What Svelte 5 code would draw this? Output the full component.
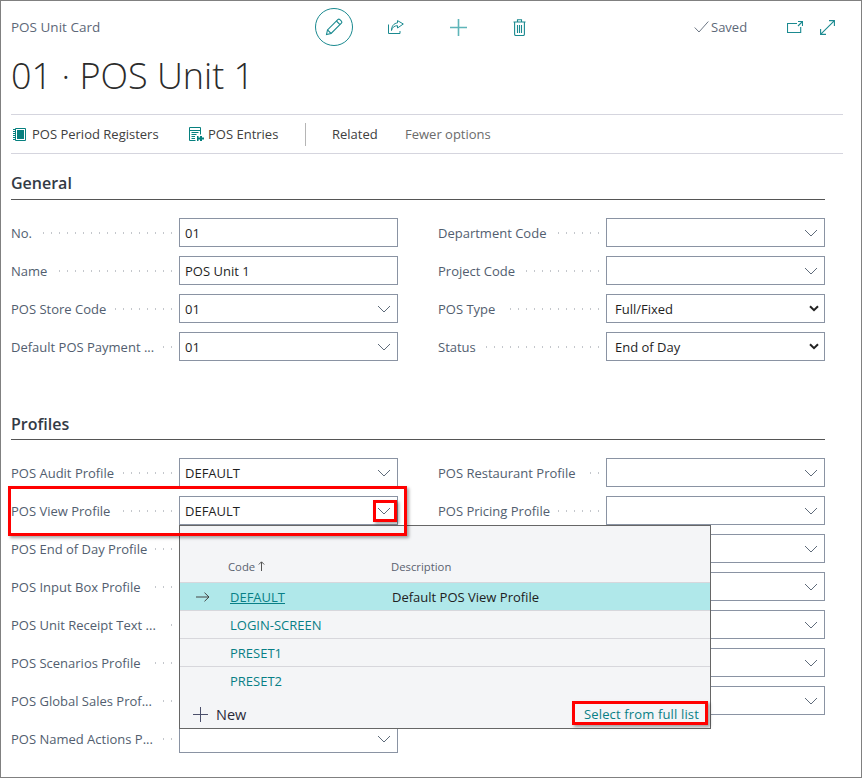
<script lang="ts">
	const general = {
		left: [
			{ label: 'No.', value: '01', kind: 'text' },
			{ label: 'Name', value: 'POS Unit 1', kind: 'text' },
			{ label: 'POS Store Code', value: '01', kind: 'lookup' },
			{ label: 'Default POS Payment ...', value: '01', kind: 'lookup' }
		],
		right: [
			{ label: 'Department Code', value: '', kind: 'lookup' },
			{ label: 'Project Code', value: '', kind: 'lookup' },
			{ label: 'POS Type', value: 'Full/Fixed', kind: 'select' },
			{ label: 'Status', value: 'End of Day', kind: 'select' }
		]
	};

	const profiles = {
		left: [
			{ label: 'POS Audit Profile', value: 'DEFAULT', kind: 'lookup' },
			{ label: 'POS View Profile', value: 'DEFAULT', kind: 'lookup' },
			{ label: 'POS End of Day Profile', value: '', kind: 'lookup' },
			{ label: 'POS Input Box Profile', value: '', kind: 'lookup' },
			{ label: 'POS Unit Receipt Text ...', value: '', kind: 'lookup' },
			{ label: 'POS Scenarios Profile', value: '', kind: 'lookup' },
			{ label: 'POS Global Sales Prof...', value: '', kind: 'lookup' },
			{ label: 'POS Named Actions P...', value: '', kind: 'lookup' }
		],
		right: [
			{ label: 'POS Restaurant Profile', value: '', kind: 'lookup' },
			{ label: 'POS Pricing Profile', value: '', kind: 'lookup' },
			{ label: '', value: '', kind: 'lookup' },
			{ label: '', value: '', kind: 'lookup' },
			{ label: '', value: '', kind: 'lookup' },
			{ label: '', value: '', kind: 'lookup' },
			{ label: '', value: '', kind: 'lookup' }
		]
	};

	const others = ['LOGIN-SCREEN', 'PRESET1', 'PRESET2'];
</script>

{#snippet field(f)}
	<div class="field">
		<span class="label">{f.label}</span>
		<span class="leader"></span>
		<div class="input {f.kind}">
			<span class="value">{f.value}</span>
			{#if f.kind === 'lookup'}
				<svg class="chev" width="14" height="8" viewBox="0 0 14 8"><path d="M1 1l6 6 6-6" fill="none" stroke="#5f6b7a" /></svg>
			{:else if f.kind === 'select'}
				<svg class="chev bold" width="10" height="7" viewBox="0 0 10 7"><path d="M1 1.2l4 4 4-4" fill="none" stroke="#222" stroke-width="2" /></svg>
			{/if}
		</div>
	</div>
{/snippet}

{#snippet columns(group)}
	<div class="columns">
		<div class="col">
			{#each group.left as f}
				{@render field(f)}
			{/each}
		</div>
		<div class="col">
			{#each group.right as f}
				{@render field(f)}
			{/each}
		</div>
	</div>
{/snippet}

<div class="page">
	<header class="head">
		<span class="caption">POS Unit Card</span>
		<div class="actions">
			<span class="edit">
				<svg width="20" height="20" viewBox="0 0 20 20" fill="none" stroke="#1b8a90" stroke-width="1.1">
					<path d="M2.5 17.5l1-4.6L13.8 2.6a1.5 1.5 0 0 1 2.1 0l1.5 1.5a1.5 1.5 0 0 1 0 2.1L7.1 16.5z" />
					<path d="M3.5 12.9l3.6 3.6M12.4 4l3.6 3.6" />
				</svg>
			</span>
			<svg class="share" width="16" height="14" viewBox="0 0 16 14" fill="none" stroke="#1b8a90" stroke-width="1">
				<path d="M.5 4.500v9h11.500V11" />
				<path d="M3.500 10.500c.5-3 2.800-4.800 6-4.800V8L15.300 4 9.500.6v2.300C6 3.200 3.500 6 3.500 10.500z" />
			</svg>
			<svg class="plus" width="17" height="17" viewBox="0 0 17 17" stroke="#5fb5b9" stroke-width="1.6"><path d="M8.500 0v17M0 8.500h17" /></svg>
			<svg class="trash" width="13" height="17" viewBox="0 0 13 17" fill="none" stroke="#1b8a90" stroke-width="1.1">
				<path d="M.5 3h12M4.500 3V.8h4V3M1.600 3v12.200a1.300 1.300 0 0 0 1.300 1.300h7.200a1.300 1.300 0 0 0 1.300-1.300V3M4.500 6v8M6.500 6v8M8.500 6v8" />
			</svg>
		</div>
		<div class="status">
			<svg width="15" height="12" viewBox="0 0 15 12" fill="none" stroke="#6d7785"><path d="M.7 6.500L5 11 14.300.5" /></svg>
			<span>Saved</span>
		</div>
		<svg class="open" width="16" height="12" viewBox="0 0 16 12" fill="none" stroke="#1b8a90" stroke-width="1.1">
			<path d="M10 2.500H.5v9h13.200V6M11 .5h4.500V5M15.500 .5L11 5" />
		</svg>
		<svg class="expand" width="15" height="15" viewBox="0 0 15 15" fill="none" stroke="#1b8a90" stroke-width="1.1">
			<path d="M.8 14.200L14.200 .8M9 .6h5.400V6M.6 9v5.400H6" />
		</svg>
	</header>
	<h1>01 · POS Unit 1</h1>

	<nav class="menu">
		<span class="item first">
			<svg width="13" height="13" viewBox="0 0 13 13">
				<path d="M2.500.5h10v12h-10z" fill="none" stroke="#07807f" />
				<rect x="4" y="2" width="7" height="9" fill="#07807f" />
				<path d="M0 1.500h2.500M0 3.500h2.500M0 5.500h2.500M0 7.500h2.500M0 9.500h2.500M0 11.500h2.500" stroke="#07807f" />
			</svg>
			POS Period Registers
		</span>
		<span class="item second">
			<svg width="15" height="14" viewBox="0 0 15 14" fill="none">
				<path d="M.5 13.500V.5h11v7M.5 13.500h6M.5 3.500h11" stroke="#07807f" />
				<path d="M2.500 5.500h7M2.500 7.500h5M2.500 9.500h3.500M2.500 11.500h3.500" stroke="#07807f" />
				<path d="M8 9h1.500v1.500H11V9h2v1.500h2v2h-2V14h-2v-1.500H9.500V14H8z" fill="#07807f" />
			</svg>
			POS Entries
		</span>
		<span class="sep"></span>
		<span class="item related">Related</span>
		<span class="item fewer">Fewer options</span>
	</nav>

	<section class="general">
		<h2>General</h2>
		{@render columns(general)}
	</section>

	<section class="profiles">
		<h2>Profiles</h2>
		{@render columns(profiles)}
	</section>

	<div class="popup">
		<div class="thead">
			<span class="th-code">Code <svg width="7" height="10" viewBox="0 0 7 10" fill="none" stroke="#555"><path d="M3.500 10V1M.8 3.500L3.500.8l2.700 2.700" /></svg></span>
			<span class="th-desc">Description</span>
		</div>
		<div class="row selected">
			<svg class="arrow" width="14" height="10" viewBox="0 0 14 10" fill="none" stroke="#444"><path d="M0 5h13M8.500.7L13 5 8.500 9.300" /></svg>
			<a class="code" href="#default">DEFAULT</a>
			<span class="desc">Default POS View Profile</span>
		</div>
		{#each others as code}
			<div class="row">
				<span class="code">{code}</span>
			</div>
		{/each}
		<div class="foot">
			<span class="new">
				<svg width="15" height="15" viewBox="0 0 15 15" stroke="#4b4f6b"><path d="M7.500 0v15M0 7.500h15" /></svg>
				New
			</span>
			<span class="full">Select from full list</span>
		</div>
	</div>

	<div class="mark mark-row"></div>
	<div class="mark mark-chev"></div>
	<div class="mark mark-full"></div>
</div>

<style>
	:global(body) {
		margin: 0;
		background: #fff;
	}

	.page {
		position: relative;
		box-sizing: border-box;
		width: 862px;
		height: 778px;
		overflow: hidden;
		padding: 0 18px 0 10px;
		border: 1px solid #808080;
		font-family: 'Open Sans', 'Noto Sans', sans-serif;
		font-size: 13px;
		color: #212121;
	}

	.head {
		display: flex;
		align-items: center;
		height: 52px;
	}

	.caption {
		width: 304px;
		font-size: 13.500px;
		color: #5d6878;
	}

	.actions {
		display: flex;
		align-items: center;
		width: 380px;
	}

	.edit {
		box-sizing: border-box;
		display: flex;
		align-items: center;
		justify-content: center;
		width: 38px;
		height: 38px;
		border: 1px solid #1b8a90;
		border-radius: 50%;
	}

	.share {
		margin-left: 35px;
	}

	.plus {
		margin-left: 46px;
	}

	.trash {
		margin-left: 46px;
	}

	.status {
		display: flex;
		align-items: center;
		gap: 2px;
		width: 93px;
		margin-left: -1px;
		color: #5d6878;
	}

	.expand {
		margin-left: 17px;
	}

	h1 {
		margin: 0;
		height: 61px;
		font-size: 36px;
		font-weight: 300;
		line-height: 46px;
		color: #2b2b2b;
	}

	.menu {
		display: flex;
		align-items: center;
		height: 38px;
		border-top: 1px solid #d5d5de;
		border-bottom: 1px solid #d5d5de;
		color: #404040;
	}

	.item {
		display: flex;
		align-items: center;
		gap: 6px;
	}

	.first {
		margin-left: 2px;
		width: 176px;
	}

	.second {
		width: 116px;
		gap: 4px;
	}

	.sep {
		width: 1px;
		height: 23px;
		margin-right: 26px;
		background: #b5b5b5;
	}

	.related {
		width: 73px;
	}

	.fewer {
		color: #6b6b6b;
	}

	section {
		width: 814px;
	}

	.general {
		margin-top: 18px;
		height: 240px;
	}

	.profiles {
		height: 340px;
	}

	h2 {
		margin: 0;
		height: 27px;
		font-size: 16px;
		font-weight: 600;
		line-height: 22px;
		color: #333a45;
		border-bottom: 1px solid #555;
	}

	.profiles h2 {
		line-height: 24px;
	}

	.columns {
		display: grid;
		grid-template-columns: 387px 387px;
		column-gap: 40px;
		padding-top: 18px;
	}

	.col {
		display: flex;
		flex-direction: column;
		gap: 9px;
	}

	.field {
		display: flex;
		align-items: center;
		height: 29px;
		width: 387px;
	}

	.label {
		white-space: nowrap;
		color: #525e6f;
	}

	.leader {
		flex: 1;
		height: 2px;
		margin: 1px 7px 0 8px;
		background: repeating-linear-gradient(to left, #c4c7cc 0 1.5px, transparent 1.5px 8px);
	}

	.input {
		box-sizing: border-box;
		display: flex;
		align-items: center;
		justify-content: space-between;
		flex: none;
		width: 219px;
		height: 29px;
		padding: 0 6px 0 5px;
		border: 1px solid #8a93a3;
		background: #fff;
		color: #1f1f1f;
	}

	.input.select {
		padding-left: 8px;
	}

	.chev.bold {
		margin-right: -1px;
	}

	.popup {
		position: absolute;
		left: 178px;
		top: 524px;
		box-sizing: border-box;
		width: 532px;
		height: 204px;
		border: 1px solid #666;
		background: #f4f5f7;
	}

	.thead {
		display: flex;
		align-items: center;
		height: 56px;
		padding-top: 25px;
		box-sizing: border-box;
		font-size: 11.300px;
		color: #5a6270;
	}

	.th-code {
		width: 163px;
		margin-left: 48px;
	}

	.row {
		display: flex;
		align-items: center;
		height: 28px;
		box-sizing: border-box;
		border-top: 1px solid #d7d7dc;
		padding-left: 50px;
		color: #087f86;
	}

	.selected {
		position: relative;
		background: #b0e8ea;
		border-bottom: 1px solid #d7d7dc;
		height: 29px;
	}

	.selected + .row {
		border-top: 0;
		height: 27px;
	}

	.arrow {
		position: absolute;
		left: 16px;
		top: 9px;
	}

	.code {
		width: 162px;
		color: #087f86;
	}

	.desc {
		color: #212121;
	}

	.foot {
		display: flex;
		align-items: center;
		justify-content: space-between;
		height: 34px;
		padding: 6px 11px 0 13px;
		box-sizing: border-box;
	}

	.new {
		display: flex;
		align-items: center;
		gap: 8px;
		font-size: 14.500px;
		color: #2a2a3a;
	}

	.full {
		letter-spacing: 0.15px;
		color: #087f86;
	}

	.mark {
		position: absolute;
		box-sizing: border-box;
		border: 3px solid #f00;
		box-shadow: 2px 2px 3px rgba(0, 0, 0, 0.35);
	}

	.mark-row {
		left: 7px;
		top: 485px;
		width: 399px;
		height: 50px;
	}

	.mark-chev {
		left: 372px;
		top: 499px;
		width: 24px;
		height: 22px;
	}

	.mark-full {
		left: 571px;
		top: 700px;
		width: 136px;
		height: 24px;
	}
</style>
